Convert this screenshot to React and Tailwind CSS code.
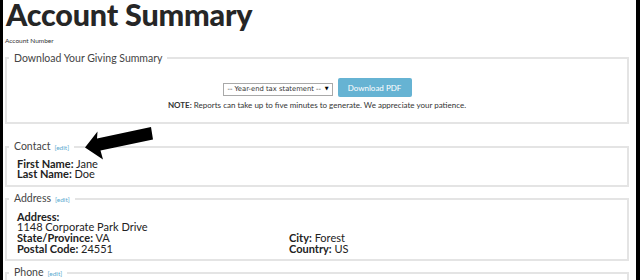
export default function App() {
  const legendCls =
    "ml-[-8px] px-[5px] text-[10.5px] leading-[14px] text-[#444]"
  const editCls = "ml-[4px] text-[6.5px] text-[#5aa9cf]"

  return (
    <div className="relative h-[280px] w-[640px] overflow-hidden border-l-[3px] border-r-[4px] border-black bg-white pl-[2px] pr-[7px] font-[family-name:Lato,sans-serif] text-[#222]">
      <h1 className="pl-[1px] text-[30.5px] leading-[29px] font-black tracking-[-0.2px] text-[#262626]">
        Account Summary
      </h1>
      <div className="mt-[8px] text-[6.5px] leading-[8px] text-[#333]">
        Account Number
      </div>

      {/* download */}
      <fieldset className="mt-[6px] border-2 border-[#e4e4e4] px-[10px] pb-[12px]">
        <legend className={legendCls}>Download Your Giving Summary</legend>
        <div className="mt-[13px] flex items-center justify-center gap-[5px]">
          <div className="mt-[3px] flex h-[13px] w-[110px] items-center border border-[#a9a9a9] bg-white pl-[4px] pr-[3px] font-[family-name:'DejaVu_Sans',sans-serif] text-[6.8px] text-[#333]">
            <span className="flex-1 whitespace-nowrap">-- Year-end tax statement --</span>
            <span className="text-[5px] text-black">▼</span>
          </div>
          <button className="h-[19px] w-[74px] rounded-[2px] bg-[#66b3d3] text-[8px] text-white">
            Download PDF
          </button>
        </div>
        <p className="mt-[2.5px] text-center text-[8px] leading-[10px] text-[#333]">
          <b>NOTE:</b> Reports can take up to five minutes to generate. We
          appreciate your patience.
        </p>
      </fieldset>

      {/* contact */}
      <fieldset className="mt-[15px] border-2 border-[#e4e4e4] px-[10px] pb-[5px]">
        <legend className={legendCls}>
          Contact<span className={editCls}>[edit]</span>
        </legend>
        <div className="mt-[4px] text-[11px] leading-[10.8px]">
          <div>
            <b>First Name:</b> Jane
          </div>
          <div>
            <b>Last Name:</b> Doe
          </div>
        </div>
      </fieldset>

      {/* address */}
      <fieldset className="mt-[4px] border-2 border-[#e4e4e4] px-[10px] pb-[4px]">
        <legend className={legendCls}>
          Address<span className={editCls}>[edit]</span>
        </legend>
        <div className="mt-[4.5px] grid grid-cols-[272px_1fr] text-[11px] leading-[10.8px]">
          <div className="font-bold">Address:</div>
          <div />
          <div>1148 Corporate Park Drive</div>
          <div />
          <div>
            <b>State/Province:</b> VA
          </div>
          <div>
            <b>City:</b> Forest
          </div>
          <div>
            <b>Postal Code:</b> 24551
          </div>
          <div>
            <b>Country:</b> US
          </div>
        </div>
      </fieldset>

      {/* phone */}
      <fieldset className="mt-[4.5px] h-[40px] border-2 border-[#e4e4e4] px-[10px]">
        <legend className={legendCls}>
          Phone<span className={editCls}>[edit]</span>
        </legend>
      </fieldset>

      {/* annotation arrow */}
      <svg
        className="pointer-events-none absolute left-[81px] top-[126px]"
        width="74"
        height="36"
        viewBox="0 0 74 36"
      >
        <polygon
          points="1,21.5 13.5,5.5 13,12.5 67,1 69,13.5 16.5,24.5 19,33.5"
          fill="#000"
        />
      </svg>
    </div>
  )
}
